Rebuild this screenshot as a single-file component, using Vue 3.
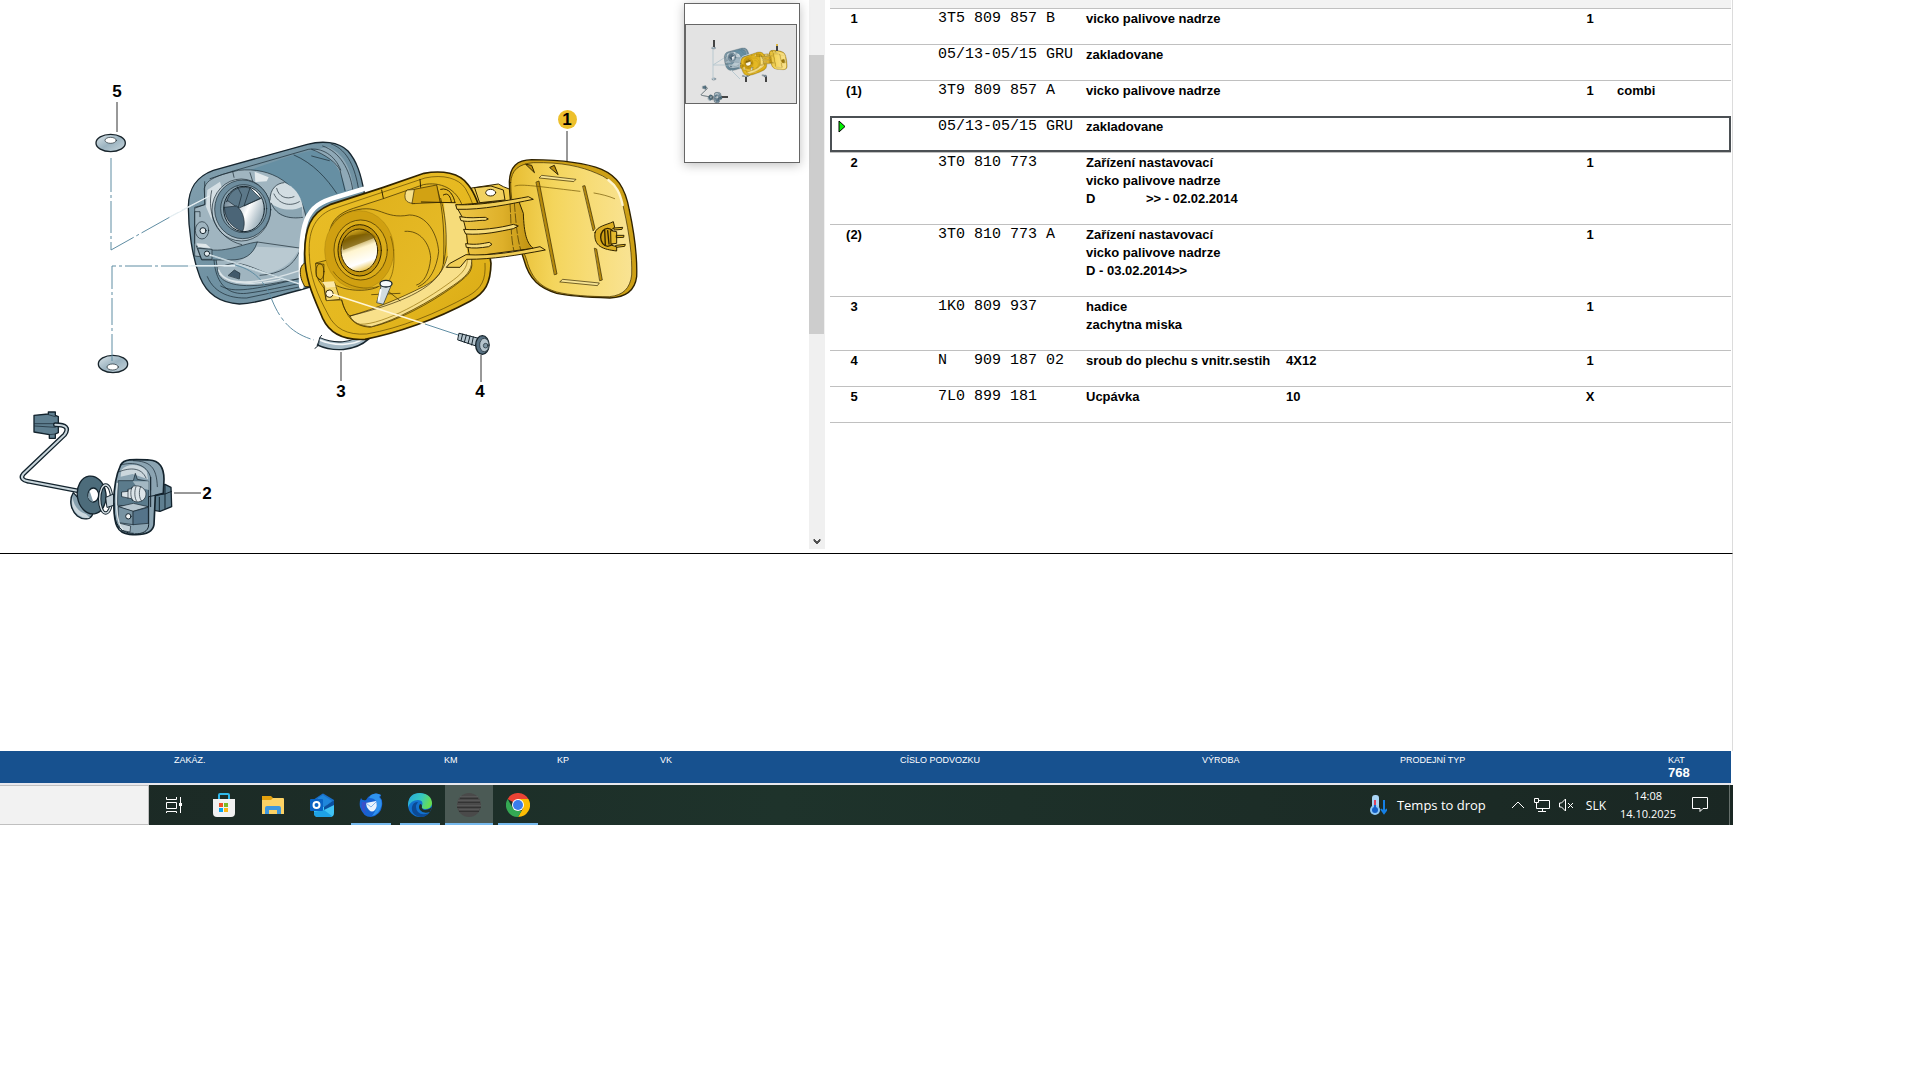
<template>
  <div class="desktop">
    <main class="catalogue">
      <section class="drawing">
        <svg class="diagram" viewBox="0 0 684 549" width="684" height="549" role="img" aria-label="Palivova nadrz">
          <defs>
            <linearGradient id="steel" x1="0" y1="0" x2="1" y2="1">
              <stop offset="0" stop-color="#86a2b0" />
              <stop offset="0.5" stop-color="#6f91a2" />
              <stop offset="1" stop-color="#7997a6" />
            </linearGradient>
            <linearGradient id="steelLight" x1="0" y1="0" x2="1" y2="1">
              <stop offset="0" stop-color="#dfe8ec" />
              <stop offset="0.5" stop-color="#9bb3c0" />
              <stop offset="1" stop-color="#c8d6dd" />
            </linearGradient>
            <linearGradient id="bore" x1="0" y1="0.2" x2="1" y2="0.7">
              <stop offset="0" stop-color="#62798a" />
              <stop offset="0.4" stop-color="#c5d0d7" />
              <stop offset="0.6" stop-color="#ffffff" />
              <stop offset="1" stop-color="#8ca3b0" />
            </linearGradient>
            <linearGradient id="gold" x1="0" y1="0" x2="1" y2="1">
              <stop offset="0" stop-color="#e9bd27" />
              <stop offset="0.6" stop-color="#e5b81f" />
              <stop offset="1" stop-color="#d6a713" />
            </linearGradient>
            <linearGradient id="goldIn" x1="0" y1="0" x2="1" y2="0.6">
              <stop offset="0" stop-color="#c99a0e" />
              <stop offset="0.3" stop-color="#e0b21d" />
              <stop offset="1" stop-color="#e8bd2a" />
            </linearGradient>
            <linearGradient id="goldBore" x1="0.3" y1="0" x2="0.6" y2="1">
              <stop offset="0" stop-color="#e2b52a" />
              <stop offset="0.2" stop-color="#8d6a02" />
              <stop offset="0.48" stop-color="#fff5cf" />
              <stop offset="0.8" stop-color="#ffffff" />
              <stop offset="1" stop-color="#e8c040" />
            </linearGradient>
            <linearGradient id="goldDoor" x1="0" y1="0" x2="1" y2="0">
              <stop offset="0" stop-color="#e7bd31" />
              <stop offset="0.35" stop-color="#f4d55c" />
              <stop offset="0.65" stop-color="#f7dc76" />
              <stop offset="1" stop-color="#f9e393" />
            </linearGradient>
            <linearGradient id="hinge" x1="0" y1="0" x2="1" y2="0">
              <stop offset="0" stop-color="#eec748" />
              <stop offset="0.6" stop-color="#deb02a" />
              <stop offset="1" stop-color="#bd900f" />
            </linearGradient>
          </defs>

          <g id="parts" fill="none" stroke-linejoin="round" stroke-linecap="round">
            <!-- grommets -->
            <g transform="translate(80 70) scale(0.33333)" stroke="#18242b" stroke-width="4">
              <ellipse cx="92" cy="219" rx="44" ry="26" fill="url(#steelLight)" />
              <ellipse cx="92" cy="211" rx="17" ry="9" fill="#fff" stroke-width="2" />
              <ellipse cx="99" cy="882" rx="44" ry="26" fill="url(#steelLight)" />
              <ellipse cx="98" cy="891" rx="17" ry="9" fill="#fff" stroke-width="2" />
            </g>

            <!-- rear housing -->
            <g transform="translate(170 120) scale(0.33333)" stroke="#17262f" stroke-width="2">
              <path
                stroke-width="4"
                fill="url(#steel)"
                d="M55 260 C56 205 78 170 130 151 L412 73 C455 62 505 64 534 93 C560 123 573 160 584 225 L590 450 L390 510 C330 523 278 550 208 552 C152 549 110 522 90 472 C66 410 55 325 55 260 Z"
              />
              <path fill="#668fa3" stroke="none" d="M240 150 L370 105 L432 90 C495 110 525 165 538 215 L410 285 C390 220 330 165 240 150 Z" />
              <path fill="#8fa9b7" stroke="none" d="M430 92 L470 80 C520 95 545 150 550 205 L528 212 C515 150 490 110 430 92 Z" />
              <path
                fill="#a0b5c0"
                d="M103 205 C108 186 120 177 158 163 L205 151 C305 140 388 192 408 290 L390 380 L389 476 C340 483 300 496 240 497 C182 497 142 482 142 445 L138 416 L74 408 L74 262 L104 254 Z"
              />
              <path fill="#b9c9d1" stroke="none" d="M260 380 L388 385 C368 430 330 455 280 462 L190 432 C220 420 245 402 260 380 Z" />
              <path fill="#d5dfe4" stroke="none" d="M112 210 L150 185 L158 210 L128 250 L125 300 L108 260 Z" />
              <path fill="#e2e9ec" stroke="none" d="M254 155 L296 172 L290 184 L256 186 Z" />
              <path fill="#7393a3" d="M80 378 C150 410 210 372 262 366 C248 408 222 420 180 420 L96 420 Z" />
              <path fill="#d2dde2" stroke="none" d="M300 245 C300 205 320 190 342 188 C372 198 392 225 398 258 L398 292 C350 300 316 290 300 245 Z" />
              <path fill="#8ba5b2" stroke="none" d="M302 250 C330 272 370 274 396 260 L398 292 C350 300 316 290 302 250 Z" />
              <path d="M320 205 C325 230 350 240 372 230 M300 240 C300 205 320 190 342 188 M312 222 C325 252 360 262 388 245 M304 250 C320 290 360 298 398 292" />
              <ellipse cx="214" cy="270" rx="88" ry="93" fill="#b3c4cd" />
              <ellipse cx="218" cy="268" rx="84" ry="88" fill="#6e8d9e" />
              <ellipse cx="221" cy="266" rx="69" ry="72" fill="#88a1ae" />
              <ellipse cx="222" cy="267" rx="61" ry="68" fill="url(#bore)" stroke-width="3" />
              <path fill="#5c7889" d="M170 245 C180 210 205 196 240 204 L272 236 L205 265 L173 242 Z" />
              <path fill="#4b6577" d="M163 262 L200 258 C222 276 228 310 218 334 C190 326 165 300 163 262 Z" />
              <path d="M202 200 L215 225 L205 262 M240 204 L222 258 L272 234" />
              <path d="M125 212 C110 280 140 355 215 374 M262 366 L388 384 M240 158 L248 184 M188 154 L192 172" />
              <path d="M388 396 C368 440 330 462 270 466 M145 440 C162 440 180 428 200 430 C240 434 270 455 320 470" />
              <path d="M146 450 C165 500 262 495 388 452 M150 462 C180 498 260 494 330 478" stroke="#dbe4e8" stroke-width="4" />
              <path fill="#41596a" d="M175 466 L193 450 L210 460 L208 476 Z" />
              <path d="M104 185 L104 254 L76 264 M120 176 L190 153 L415 88 C455 82 495 105 512 150 M74 370 L74 275 L90 275 L90 290" />
              <path d="M372 105 C430 130 470 175 500 220 M425 88 C470 105 500 130 510 150 L525 212 M458 78 C510 95 540 150 548 208 M484 72 C536 90 556 150 565 204 M425 108 L478 122" />
              <path d="M132 420 C138 500 180 525 230 520 C290 512 340 500 390 490 M152 498 C190 520 250 510 390 475 M112 470 C135 525 190 535 230 534 L392 500" />
              <ellipse cx="96" cy="331" rx="20" ry="26" fill="#9fb4bf" />
              <circle cx="99" cy="332" r="9" fill="#e9eef0" stroke-width="3" />
              <path fill="#dfe7ea" stroke="none" d="M80 370 L108 372 L122 384 L84 382 Z" />
              <path fill="#86a0ad" d="M84 385 L126 388 L126 418 L96 418 Z" />
              <circle cx="111" cy="401" r="8" fill="#e4ebee" stroke-width="3" />
              <path d="M118 228 L36 270 M0 290 L24 277" stroke="#e8f0f3" stroke-width="3" />
              <path d="M120 405 L390 492 M65 437 L200 437" stroke="#e3edf1" stroke-width="4" />
              <path d="M124 407 L390 490" stroke="#6c91a5" stroke-width="1" />
            </g>

            <!-- hose -->
            <g transform="translate(170 120) scale(0.33333)">
              <path d="M445 664 C490 684 550 684 590 648" stroke="#17262f" stroke-width="27" stroke-linecap="butt" />
              <path d="M447 664 C490 684 550 684 592 644" stroke="#a4b9c5" stroke-width="20" stroke-linecap="butt" />
              <path d="M449 660 C490 678 550 678 580 656" stroke="#f4f7f8" stroke-width="5" />
              <path d="M455 646 C440 655 455 675 435 685" stroke="#17262f" stroke-width="3" />
            </g>

            <!-- front housing -->
            <g transform="translate(170 120) scale(0.33333)" stroke="#302300" stroke-width="2">
              <path d="M580 207 L500 231 C405 258 388 300 394 500" stroke="#fff" stroke-width="14" />
              <path fill="#f0cb48" stroke-width="3" d="M905 204 L985 192 L1000 200 L1030 212 L1030 300 L930 310 Z" />
              <path fill="#dcae1c" d="M412 428 C385 428 385 470 405 500 L425 500 Z" stroke-width="3" />
              <path
                stroke-width="5"
                fill="url(#gold)"
                d="M404 400 C404 330 420 278 480 254 L640 202 L762 160 C815 150 870 158 895 195 C920 225 935 280 945 320 L963 430 C962 490 946 518 900 544 C800 598 680 640 585 658 C515 662 478 638 458 595 C430 530 405 480 404 400 Z"
              />
              <path
                fill="none"
                stroke="#5b4302"
                d="M418 405 C414 340 430 292 485 268 L640 216 L765 174 C820 162 866 175 886 205 C905 235 918 280 926 310 M945 430 C948 480 935 505 895 528 C800 580 690 625 590 642 C530 646 495 625 475 585 C440 520 420 470 418 405"
              />
              <path
                fill="url(#goldIn)"
                d="M484 416 L478 345 C480 300 510 278 550 265 L640 236 L760 194 C810 184 860 205 878 260 L905 425 C910 455 890 470 850 500 C780 550 680 605 600 622 C548 618 530 590 515 540 L468 540 L462 505 L445 480 L438 430 Z"
              />
              <path fill="#f8e08a" d="M905 425 C905 452 888 470 850 496 C780 545 680 600 605 620 C568 618 548 606 540 588 C620 565 690 535 760 500 C800 480 822 450 832 410 L905 410 Z" />
              <path d="M560 612 C620 622 750 555 850 480 C880 458 892 440 892 420" stroke="#8f6c08" />
              <path fill="#f6dc7a" stroke="none" d="M822 250 L856 250 L885 300 L892 405 L835 435 Z" />
              <path d="M480 345 C482 305 515 280 550 272 C630 250 640 300 718 285 C770 285 802 340 806 395 C800 445 780 485 745 500 M705 334 C750 330 780 370 782 415 C778 460 760 490 740 495" />
              <path d="M812 235 C832 300 835 390 815 450 C780 520 650 560 540 588 M800 198 C822 270 824 360 820 430" />
              <path fill="#f7e089" d="M706 218 C700 245 715 250 735 250 L746 235 L742 208 L712 210 Z" />
              <path fill="#d2a213" d="M726 250 L733 208 L800 195 L810 246 Z" />
              <path d="M635 210 L640 235 M750 178 L752 202 M812 208 C838 200 852 230 855 248 M820 225 C835 215 842 232 844 246 M754 246 L855 248" stroke-width="3" />

              <ellipse cx="568" cy="390" rx="104" ry="118" fill="#d0a011" stroke="#8f6c08" stroke-width="1" />
              <path d="M490 455 C520 500 590 520 650 490 C678 465 676 390 662 350" stroke="#6c5102" />
              <ellipse cx="572" cy="390" rx="80" ry="90" fill="#dbac19" />
              <ellipse cx="569" cy="391" rx="65" ry="77" fill="#c2930d" stroke-width="3" />
              <ellipse cx="568" cy="391" rx="55" ry="64" fill="url(#goldBore)" stroke-width="3" />
              <path fill="#795b03" stroke="none" d="M516 374 C522 358 532 350 545 346 L606 340 L618 352 L520 390 Z" opacity="0.7" />

              <path fill="#d9aa17" d="M438 430 L462 433 L460 488 L440 470 Z" />
              <ellipse cx="450" cy="455" rx="12" ry="24" />
              <path fill="#f4d86f" d="M462 488 L494 488 L510 538 L470 542 Z" />
              <circle cx="478" cy="521" r="11" fill="#fff7dd" stroke-width="3" />
              <path fill="#fbe9a8" stroke="none" d="M456 486 L492 484 L497 500 L470 503 Z" />
              <path d="M500 497 C550 520 610 510 625 500 M650 510 L690 542 M605 524 L690 520 M515 540 C520 565 530 580 540 588" />
              <path fill="#d2dce1" stroke="#17262f" d="M634 495 L620 548 L640 553 L662 500 Z" />
              <ellipse cx="648" cy="491" rx="18" ry="10" fill="#f5f8f9" stroke="#17262f" stroke-width="4" />
              <path d="M632 510 L626 540" stroke="#fff" stroke-width="6" />
              <path d="M486 522 L765 612" stroke="#fff6d8" stroke-width="4" />
            </g>

            <!-- filler door -->
            <g transform="translate(450 100) scale(0.33333)" stroke="#302300" stroke-width="2">
              <path fill="#f1d160" stroke-width="3" d="M75 263 L123 258 L160 270 L165 300 L90 308 Z" />
              <ellipse cx="122" cy="278" rx="15" ry="10" fill="#fff" stroke-width="3" />
              <path
                stroke-width="4"
                fill="#cda016"
                d="M178 245 C180 200 200 180 245 179 C335 180 405 188 455 208 C500 228 525 260 538 330 C555 410 562 475 560 530 C555 570 530 592 480 594 C420 592 360 589 320 580 C270 565 238 540 222 480 C200 415 178 320 178 245 Z"
              />
              <path
                fill="url(#goldDoor)"
                d="M182 248 C184 210 206 192 250 188 C335 186 395 200 440 220 C490 238 512 275 522 330 C538 400 547 470 545 525 C540 565 520 586 478 590 C420 590 360 586 320 576 C275 562 246 540 230 480 C205 415 182 320 182 248 Z"
              />
              <path stroke="#fff5ce" stroke-width="7" d="M475 240 C500 258 510 280 518 315" />
              <path fill="#b88b0b" d="M228 193 L245 196 L253 217 Z M300 202 L313 196 L324 223 Z" stroke-width="3" />
              <path fill="#f7e493" d="M268 233 L275 226 L378 238 L372 244 Z M330 545 L338 538 L448 549 L443 556 Z" />
              <path fill="#b88b0b" d="M259 246 L267 243 L321 522 L314 524 Z M399 258 L405 257 L435 385 L430 392 Z M434 445 L440 447 L457 540 L450 542 Z" />
              <path d="M195 258 C210 252 240 256 390 274 M432 279 C455 283 475 288 494 296" stroke="#6c5102" />

              <path fill="url(#hinge)" stroke-width="3" d="M20 315 L205 300 L220 340 C222 400 230 430 250 445 L60 470 C48 440 58 380 25 330 Z" />
              <path d="M180 310 C184 370 182 420 194 460 M193 308 C198 370 202 420 214 455" stroke-dasharray="26 7" stroke="#3c2d00" />
              <path fill="#f0cd55" stroke-width="3" d="M18 314 C60 316 120 312 235 290 L250 298 C180 312 100 330 22 328 Z" />
              <path
                fill="#f6dc7a"
                stroke-width="3"
                d="M30 350 C60 356 80 352 106 352 L115 357 L106 361 C80 360 60 368 34 362 Z M42 388 C90 392 150 384 190 373 L205 378 L190 386 C150 394 100 406 48 402 Z M48 431 C80 436 100 430 118 427 L126 433 L116 440 C90 444 70 446 50 442 Z"
              />
              <path fill="#f0cd55" stroke-width="3" d="M0 490 L48 464 C120 468 200 456 270 440 L286 450 C200 466 130 478 50 478 L30 502 L-10 502 Z" />

              <path fill="#dcae22" stroke-width="3" d="M435 398 C440 378 470 375 490 365 L494 382 L480 392 C455 385 450 440 478 434 L500 440 L500 453 C460 448 430 440 435 398 Z" />
              <ellipse cx="473" cy="412" rx="21" ry="27" fill="#cf9f12" stroke-width="4" />
              <path d="M473 392 L477 432 M464 390 L466 434" stroke-width="4" />
              <path fill="#e5ba2d" stroke-width="3" d="M483 392 L500 395 L500 430 L484 432 Z M492 384 L518 382 L516 388 L494 390 Z M500 406 L522 406 L521 412 L500 413 Z M498 436 L526 433 L524 439 L500 442 Z" />
            </g>

            <!-- screw -->
            <g transform="translate(450 100) scale(0.33333)" stroke="#15232b" stroke-width="3">
              <path fill="#b6c5ce" d="M28 700 L86 715 L78 738 L24 720 Z" />
              <path d="M38 702 L33 722 M49 705 L43 727 M60 708 L54 731 M70 711 L65 735" stroke-width="3" />
              <ellipse cx="97" cy="735" rx="20" ry="28" fill="#587182" stroke-width="4" />
              <ellipse cx="103" cy="735" rx="14" ry="20" fill="#b5c4cd" stroke-width="2" />
              <circle cx="107" cy="737" r="7" fill="#7e95a3" stroke-width="2" />
            </g>

            <!-- actuator with cable -->
            <g transform="translate(0 390) scale(0.33333)" stroke="#13232d" stroke-width="3">
              <path fill="#5f7f90" stroke-width="4" d="M102 76 L145 72 L145 66 L166 66 L166 76 L175 80 L175 128 L166 132 L166 145 L148 145 L148 134 L102 126 Z" />
              <path d="M104 101 L164 101 M104 108 L166 112 M145 74 L166 80 M148 134 L166 132" stroke-width="2" />
              <path d="M166 104 C198 104 208 114 194 134 L70 252 C60 264 70 272 84 274 L240 304" stroke-width="14" />
              <path d="M166 104 C198 104 208 114 194 134 L70 252 C60 264 70 272 84 274 L240 304" stroke="#c9d6dc" stroke-width="6" />
              <path fill="#86a0ae" stroke-width="4" d="M220 308 C206 330 212 360 232 378 C250 392 274 388 278 372 Z" />
              <path fill="#cbd7dd" d="M218 322 C220 345 235 366 258 372 L270 384 C240 388 208 362 218 322 Z" stroke="none" />
              <ellipse cx="275" cy="315" rx="43" ry="57" fill="#4d6c7b" stroke-width="4" transform="rotate(-8 275 315)" />
              <ellipse cx="280" cy="315" rx="16" ry="21" fill="#fff" stroke-width="4" />
              <path d="M268 300 L264 322 C268 332 275 336 280 336 Z" fill="#839dab" stroke="none" />
              <ellipse cx="317" cy="327" rx="18" ry="42" stroke="#13232d" stroke-width="10" />
              <ellipse cx="317" cy="327" rx="18" ry="42" stroke="#d9e2e6" stroke-width="4" />
              <path fill="#c0ced6" d="M318 322 L340 312 L344 345 L322 352 Z" />
              <path fill="#5f7f90" stroke-width="4" d="M450 290 L495 283 L513 292 L515 350 L480 364 L445 358 Z" />
              <path d="M450 318 L495 312 L515 304 M478 322 L478 364 M495 285 L495 355" />
              <path fill="#8ba4b2" stroke-width="5" d="M362 225 C372 206 400 208 448 210 C480 212 492 232 492 268 L490 310 L466 316 L462 404 C458 430 430 437 388 433 C352 430 342 402 342 350 C340 300 345 262 362 225 Z" />
              <path fill="#cbd7dd" stroke="none" d="M364 240 C380 220 420 220 440 242 L444 268 L398 252 L362 260 Z" />
              <path d="M362 225 C400 214 440 222 452 262 L452 300 M400 212 C450 214 470 230 472 290 M358 245 C390 232 425 232 438 264" stroke-width="2" />
              <path fill="#5b7b8c" stroke-width="2" d="M356 272 L400 272 L406 250 L412 268 L446 274 L446 350 L354 346 Z" />
              <path fill="#a3b8c3" d="M398 274 L446 274 L446 300 L410 290 Z" stroke="none" />
              <path fill="#dbe4e8" stroke-width="2" d="M366 306 L384 304 L384 298 L394 296 L400 288 C425 284 438 300 438 312 C438 330 420 340 402 334 L394 326 L384 324 L366 320 Z" />
              <path d="M384 300 L384 324 M396 292 C390 305 392 322 398 332 M408 290 C402 305 404 325 410 334 M422 290 C415 305 418 325 424 332" stroke-width="2" />
              <path fill="#b6c6cf" stroke-width="2" d="M356 350 L400 340 L445 350 L400 364 Z" />
              <path fill="#7893a2" stroke-width="2" d="M356 350 L400 364 L400 404 L356 398 Z" />
              <path fill="#55748a" stroke-width="2" d="M400 364 L445 352 L445 400 L400 404 Z" />
              <circle cx="385" cy="379" r="8" fill="#f0f4f5" />
              <path fill="#c5d2d9" stroke-width="2" d="M360 400 L392 408 L390 426 L358 420 Z" />
              <path d="M342 340 C340 400 358 430 400 430 M466 316 L446 320 L446 404 C446 425 425 432 405 432 M452 262 L452 350" />
              <path d="M352 280 C346 320 348 400 368 418" stroke="#dbe4e8" stroke-width="4" />
            </g>
          </g>

          <!-- assembly lines -->
          <g class="assembly">
            <path d="M111 158 V250 L170 217" stroke-dasharray="34 3 3 3 32 3 3 3" />
            <path d="M112 361 V266 H188" stroke-dasharray="27 3 3 3" />
            <path d="M235 265 C255 270 265 282 272 300 C281 322 293 334 314 340" stroke-dasharray="30 3 4 3" />
            <path d="M425 324 L458 335" />
            <path class="over" d="M208 197 L170 217 M188 266 H235" />
          </g>

          <g class="leaders">
            <path d="M117 102 V132 M567 131 V161 M341 352 V381 M481 355 V382 M174 493 H201" />
          </g>
          <circle cx="567.5" cy="119.5" r="9.5" fill="#edc02c" />
          <g class="callouts">
            <text x="117" y="97">5</text>
            <text x="567" y="125">1</text>
            <text x="341" y="397">3</text>
            <text x="480" y="397">4</text>
            <text x="207" y="499">2</text>
          </g>
        </svg>

        <aside class="overview">
          <svg class="overview-view" viewBox="0 0 110 78" width="110" height="78" aria-hidden="true">
            <use href="#parts" transform="translate(12 3) scale(0.14)" />
            <path d="M27 25 V54 M27 40 L38 33 M27 40 H39 M45 45 L54 54" stroke="#b9c9d0" fill="none" />
            <path d="M28 15 V22 M91 21 V26 M60 52 V57 M80 52 V57 M36 72 H42" stroke="#444" stroke-width="2" />
            <circle cx="91" cy="20" r="1" fill="#d9a90f" />
          </svg>
        </aside>
      </section>

      <div class="scrollbar">
        <div class="thumb"></div>
        <button type="button" class="scroll-down" aria-label="Dolů">
          <svg viewBox="0 0 8 7" width="8" height="7">
            <path d="M1 1 L4 4 L7 1 V3 L4 6 L1 3 Z" fill="#505050" stroke="#505050" />
          </svg>
        </button>
      </div>

      <section class="parts">
        <div class="parts-head"></div>
        <table>
          <colgroup>
            <col class="col-mark" />
            <col class="col-pos" />
            <col class="col-number" />
            <col class="col-name" />
            <col class="col-remark" />
            <col class="col-qty" />
            <col />
          </colgroup>
          <tbody>
            <tr v-for="(part, i) in parts" :key="i" :class="{ selected: i === selected }" @click="selected = i">
              <td class="mark">
                <svg v-if="i === selected" viewBox="0 0 8 13" width="8" height="13">
                  <path d="M1 1 L7 6.500 L1 12 Z" fill="#00f000" stroke="#000" />
                </svg>
              </td>
              <td class="center">{{ part.pos }}</td>
              <td class="number">{{ part.number }}</td>
              <td>{{ part.name }}</td>
              <td>{{ part.remark }}</td>
              <td class="center">{{ part.qty }}</td>
              <td class="model">{{ part.model }}</td>
            </tr>
          </tbody>
        </table>
      </section>
    </main>

    <section class="notes"></section>

    <footer class="vehicle">
      <div v-for="field in vehicle" :key="field.label">
        <span>{{ field.label }}</span>
        <strong>{{ field.value }}</strong>
      </div>
    </footer>

    <nav class="taskbar">
      <input type="search" class="search" aria-label="Hledat" />
      <button type="button" class="task-view" aria-label="Task view">
        <svg viewBox="0 0 24 24" width="24" height="24" fill="none" stroke="#fff">
          <path d="M4.500 4 V6.500 H14.500 V4 M4.500 9.500 H14.500 V15.500 H4.500 Z M4.500 20 V18.500 H14.500 V20 M18.500 4 V20" />
          <path d="M17 10 H20 V13 H17 Z" fill="#fff" stroke="none" />
        </svg>
      </button>
      <button type="button" aria-label="Store">
        <svg viewBox="0 0 24 24" width="24" height="24">
          <path d="M7 7 V2 Q7 1 8 1 H16 Q17 1 17 2 V7" fill="none" stroke="#30b8ea" stroke-width="2" />
          <path d="M1 6 H23 V20 Q23 24 19 24 H5 Q1 24 1 20 Z" fill="#f1f1f1" />
          <path d="M7 10 H11 V14 H7 Z" fill="#f05125" />
          <path d="M12 10 H16 V14 H12 Z" fill="#7db926" />
          <path d="M7 15 H11 V19 H7 Z" fill="#05a4ef" />
          <path d="M12 15 H16 V19 H12 Z" fill="#fdb813" />
        </svg>
      </button>
      <button type="button" aria-label="Explorer">
        <svg viewBox="0 0 24 24" width="24" height="24">
          <path d="M1 3 H10 L12 5 H22 V10 H1 Z" fill="#e2a10e" />
          <path d="M1 7 H10 L12 5 H22 Q23 5 23 6 V21 H1 Z" fill="#fcd265" />
          <path d="M4 21 V15 Q4 13 6 13 H18 Q20 13 20 15 V21 H16 V17 H8 V21 Z" fill="#3f97dc" />
        </svg>
      </button>
      <button type="button" aria-label="Outlook">
        <svg viewBox="0 0 24 24" width="24" height="24">
          <path d="M3 7 L12 1 Q13 0 14 1 L24 7 V12 H3 Z" fill="#1a6fc9" />
          <path d="M8 5 L13 2 L22 8 L13 15 L8 11 Z" fill="#1f86dc" />
          <path d="M24 7 V20 Q24 24 20 24 H8 Q4 24 4 20 V14 H14 Z" fill="#41c4f6" />
          <path d="M24 7 L14 14 V17 L24 12 Z" fill="#0b4f9f" />
          <path d="M4 19 L14 17 L22 23 Q21 24 20 24 H8 Q4 24 4 20 Z" fill="#1ea2e6" />
          <path d="M1 6 H12 Q13 6 13 7 V17 Q13 18 12 18 H1 Q0 18 0 17 V7 Q0 6 1 6 Z" fill="#0a63c4" />
          <circle cx="6.500" cy="12" r="3" fill="none" stroke="#fff" stroke-width="2" />
        </svg>
      </button>
      <button type="button" class="running" aria-label="Thunderbird">
        <svg viewBox="0 0 24 24" width="24" height="24">
          <path d="M2 5 Q0 9 1 14 Q4 24 12 24 Q22 22 23 13 Q24 7 21 4 Q22 3 22 2 Q17 -1 12 2 Q8 4 7 7 Q3 8 2 5 Z" fill="#1763d2" />
          <path d="M12 2 Q17 -1 22 2 Q20 3 20 4 Q24 8 22 14 Q20 21 13 23 Q20 14 17 8 Q15 5 10 5 Z" fill="#2f93ee" />
          <path d="M3 9 Q1 16 7 21 Q4 15 8 9 Z" fill="#3b4fc8" />
          <path d="M7 10 L17 8 Q19 13 16 17 Q13 20 10 17 Q7 14 7 10 Z" fill="#e9f3fd" />
          <path d="M7 10 L12 14 L17 9" fill="none" stroke="#81b5ec" />
        </svg>
      </button>
      <button type="button" class="running" aria-label="Edge">
        <svg viewBox="0 0 24 24" width="24" height="24">
          <defs>
            <linearGradient id="edgeTop" x1="0" y1="0" x2="1" y2="0.3">
              <stop offset="0" stop-color="#26a8e0" />
              <stop offset="0.6" stop-color="#37c8bd" />
              <stop offset="1" stop-color="#67dc52" />
            </linearGradient>
          </defs>
          <circle cx="12" cy="12" r="12" fill="#1272cf" />
          <path d="M0 11 Q1 0 12 0 Q24 1 24 11 Q23 16 17 16 Q13 16 14 13 Q16 7 10 7 Q3 7 0 14 Z" fill="url(#edgeTop)" />
          <path d="M10 9 Q6 14 10 19 Q14 23 21 20 Q16 26 9 23 Q3 20 4 14 Q5 9 10 9 Z" fill="#0c4a95" />
          <path d="M14 13 Q13 16 17 17 Q21 17 24 14 L22 19 Q15 21 12 17 Q10 14 12 11 Q14 11 14 13 Z" fill="#1f302b" />
        </svg>
      </button>
      <button type="button" class="running active" aria-label="Katalog">
        <svg viewBox="0 0 24 24" width="24" height="24">
          <circle cx="12" cy="12" r="12" fill="#4a4a4a" />
          <path d="M3 5 H21 M1 9 H23 M0 14 H24 M2 18 H22" stroke="#1c1c1c" />
          <path d="M3 4 H21 M1 8 H23 M0 13 H24 M2 17 H22" stroke="#808080" stroke-width="0.500" />
        </svg>
      </button>
      <button type="button" class="running" aria-label="Chrome">
        <svg viewBox="0 0 24 24" width="24" height="24">
          <path d="M12 12 L1.600 6 A12 12 0 0 1 22.400 6 Z" fill="#ea4335" />
          <path d="M12 6 H22.400 A12 12 0 0 1 12 24 L17.200 15 Z" fill="#fbbc05" />
          <path d="M1.600 6 L6.800 15 L12 18 H15.500 L12 24 A12 12 0 0 1 1.600 6 Z" fill="#34a853" />
          <circle cx="12" cy="12" r="6" fill="#fff" />
          <circle cx="12" cy="12" r="5" fill="#3a7cec" />
        </svg>
      </button>

      <div class="tray">
        <a href="#" class="weather">
          <svg viewBox="0 0 18 22" width="18" height="22">
            <rect x="3" y="1" width="7" height="15" rx="3" fill="#a9d4f5" />
            <circle cx="6" cy="16" r="5" fill="#8ec7f4" />
            <path d="M6 6 V12" stroke="#e0425e" stroke-width="2" />
            <path d="M6 11 V16" stroke="#1a66cf" stroke-width="2" />
            <circle cx="6" cy="16" r="3" fill="#1460c8" />
            <path d="M15 6 V18 M12 15 L15 19 L18 15" fill="none" stroke="#1580e6" stroke-width="2" />
          </svg>
          Temps to drop
        </a>
        <button type="button" class="small" aria-label="Hidden icons">
          <svg viewBox="0 0 14 14" width="14" height="14" fill="none" stroke="#fff">
            <path d="M1 10 L7 4 L13 10" />
          </svg>
        </button>
        <button type="button" class="small" aria-label="Network">
          <svg viewBox="0 0 18 14" width="18" height="14" fill="none" stroke="#fff">
            <path d="M6 2.500 H16.500 V10.500 H3.500 V7 M9.500 10.500 V13.500 M5 13.500 H13 M1.500 0.500 H5.500 V4.500 H1.500 Z M3.500 4.500 V8" />
          </svg>
        </button>
        <button type="button" class="small" aria-label="Volume">
          <svg viewBox="0 0 16 14" width="16" height="14" fill="none" stroke="#fff">
            <path d="M1.500 5 H3.500 L7.500 1 V13 L3.500 9 H1.500 Z M10 5 L15 10 M15 5 L10 10" />
          </svg>
        </button>
        <button type="button" class="lang">SLK</button>
        <time class="clock" datetime="2025-10-14T14:08">
          <span>14:08</span>
          <span>14.10.2025</span>
        </time>
        <button type="button" class="action" aria-label="Notifications">
          <svg viewBox="0 0 18 18" width="18" height="18" fill="none" stroke="#fff">
            <path d="M1.500 1.500 H16.500 V12.500 H12 L9 15.500 V12.500 H1.500 Z" />
          </svg>
        </button>
      </div>
    </nav>
  </div>
</template>

<script setup>
import { ref } from "vue";

const selected = ref(3);

const parts = [
  { pos: "1", number: "3T5 809 857 B", name: "vicko palivove nadrze", qty: "1" },
  { number: "05/13-05/15 GRU", name: "zakladovane" },
  { pos: "(1)", number: "3T9 809 857 A", name: "vicko palivove nadrze", qty: "1", model: "combi" },
  { number: "05/13-05/15 GRU", name: "zakladovane" },
  {
    pos: "2",
    number: "3T0 810 773",
    name: "Zařízení nastavovací\nvicko palivove nadrze\nD              >> - 02.02.2014",
    qty: "1",
  },
  {
    pos: "(2)",
    number: "3T0 810 773 A",
    name: "Zařízení nastavovací\nvicko palivove nadrze\nD - 03.02.2014>>",
    qty: "1",
  },
  { pos: "3", number: "1K0 809 937", name: "hadice\nzachytna miska", qty: "1" },
  { pos: "4", number: "N   909 187 02", name: "sroub do plechu s vnitr.sestih", remark: "4X12", qty: "1" },
  { pos: "5", number: "7L0 899 181", name: "Ucpávka", remark: "10", qty: "X" },
];

const vehicle = [
  { label: "ZAKÁZ." },
  { label: "KM" },
  { label: "KP" },
  { label: "VK" },
  { label: "CÍSLO PODVOZKU" },
  { label: "VÝROBA" },
  { label: "PRODEJNÍ TYP" },
  { label: "KAT", value: "768" },
];
</script>

<style>
body {
  background: #fff;
}
</style>

<style scoped>
.desktop {
  margin-right: 187px;
  color: #000;
  font-family: "Liberation Sans", Arial, sans-serif;
}
.catalogue {
  display: grid;
  grid-template-columns: minmax(0, 809fr) 16px minmax(0, 907fr);
  min-height: 553px;
  border-right: 1px solid #dcdcdc;
  border-bottom: 1px solid #000;
}
.drawing {
  position: relative;
}
.diagram {
  display: block;
}
.assembly {
  fill: none;
  stroke: #5f8da3;
}
.assembly .over {
  stroke: #e3edf1;
}
.leaders {
  fill: none;
  stroke: #333;
}
.callouts {
  font-size: 17px;
  font-weight: 700;
  text-anchor: middle;
}
.overview {
  position: absolute;
  top: 3px;
  right: 9px;
  box-sizing: border-box;
  width: 116px;
  height: 160px;
  padding-top: 20px;
  border: 1px solid #666;
  background: #fff;
  box-shadow: 0 2px 10px rgba(0, 0, 0, 0.25);
}
.overview-view {
  display: block;
  border: 1px solid #666;
  background: #e3e3e3;
}
.scrollbar {
  display: flex;
  flex-direction: column;
  justify-content: space-between;
  box-sizing: border-box;
  margin-bottom: 4px;
  padding-top: 55px;
  background: #f0f0f0;
}
.thumb {
  width: 15px;
  height: 279px;
  background: #cdcdcd;
}
button {
  padding: 0;
  border: 0;
  background: none;
  color: inherit;
  font: inherit;
}
.scroll-down {
  display: flex;
  align-items: center;
  justify-content: center;
  width: 15px;
  height: 16px;
}
.parts {
  padding: 0 1px 0 5px;
}
.parts-head {
  height: 8px;
  border-bottom: 1px solid #c0c0c0;
  background: #f2f2f2;
}
table {
  width: 100%;
  table-layout: fixed;
  border-spacing: 0;
  font-size: 13px;
  font-weight: 700;
  line-height: 18px;
}
.col-mark,
.col-pos {
  width: 16px;
}
.col-number {
  width: 224px;
}
.col-name {
  width: 200px;
}
.col-remark {
  width: 293px;
}
.col-qty {
  width: 22px;
}
tr {
  position: relative;
}
td {
  padding: 1px 0 16px;
  border-bottom: 1px solid #c0c0c0;
  vertical-align: top;
  white-space: pre;
}
td.mark {
  padding: 3px 0 0 8px;
  line-height: 0;
}
.center {
  text-align: center;
}
td.number {
  padding-left: 76px;
  font-family: "Liberation Mono", "Courier New", monospace;
  font-size: 15px;
  font-weight: 400;
}
td.model {
  padding-left: 16px;
}
.selected .mark::after {
  content: "";
  position: absolute;
  inset: -1px 0 1px;
  border: 2px solid #4b5054;
}
.notes {
  min-height: 197px;
  border-right: 1px solid #dcdcdc;
}
.vehicle {
  display: grid;
  grid-template-columns: 270fr 113fr 103fr 240fr 302fr 198fr 268fr 63fr;
  box-sizing: border-box;
  height: 34px;
  margin-right: 2px;
  padding: 4px 0 0 174px;
  border-bottom: 2px solid #e8e8ee;
  background: #17518f;
  color: #fff;
  font-size: 9px;
  line-height: 10px;
}
.vehicle span,
.vehicle strong {
  display: block;
  white-space: nowrap;
}
.vehicle strong {
  font-size: 13px;
  line-height: 16px;
}
.taskbar {
  display: flex;
  height: 40px;
  gap: 1px;
  background: linear-gradient(90deg, #1b2824, #1e332b 45%, #1a2723);
  color: #fff;
  font-family: "Open Sans", "Noto Sans", sans-serif;
}
.search {
  box-sizing: border-box;
  width: 149px;
  margin: 0 -1px 0 0;
  padding: 0 12px;
  border: solid #c0c0c0;
  border-width: 1px 1px 1px 0;
  border-radius: 0;
  background: #f2f2f2;
}
.taskbar > button {
  display: flex;
  align-items: center;
  justify-content: center;
  box-sizing: border-box;
  width: 48px;
}
.taskbar > .task-view {
  width: 50px;
}
.running {
  background: linear-gradient(#76b9ed, #76b9ed) bottom / 40px 2px no-repeat;
}
.active {
  background-color: #4b5a55;
  background-size: 48px 2px;
}
.tray {
  display: flex;
  align-items: center;
  margin-left: auto;
  padding-right: 3px;
}
.weather {
  display: flex;
  align-items: center;
  gap: 10px;
  margin-right: 20px;
  color: #fff;
  font-size: 13px;
  text-decoration: none;
}
.small {
  display: flex;
  justify-content: center;
  width: 24px;
}
.lang {
  margin-left: 8px;
  font-size: 12px;
}
.clock {
  display: flex;
  flex-direction: column;
  width: 84px;
  font-size: 11px;
  line-height: 18px;
  text-align: center;
}
.action {
  display: flex;
  align-items: center;
  justify-content: center;
  width: 40px;
  height: 40px;
  padding-right: 20px;
  border-right: 1px solid #66706c;
}
</style>
